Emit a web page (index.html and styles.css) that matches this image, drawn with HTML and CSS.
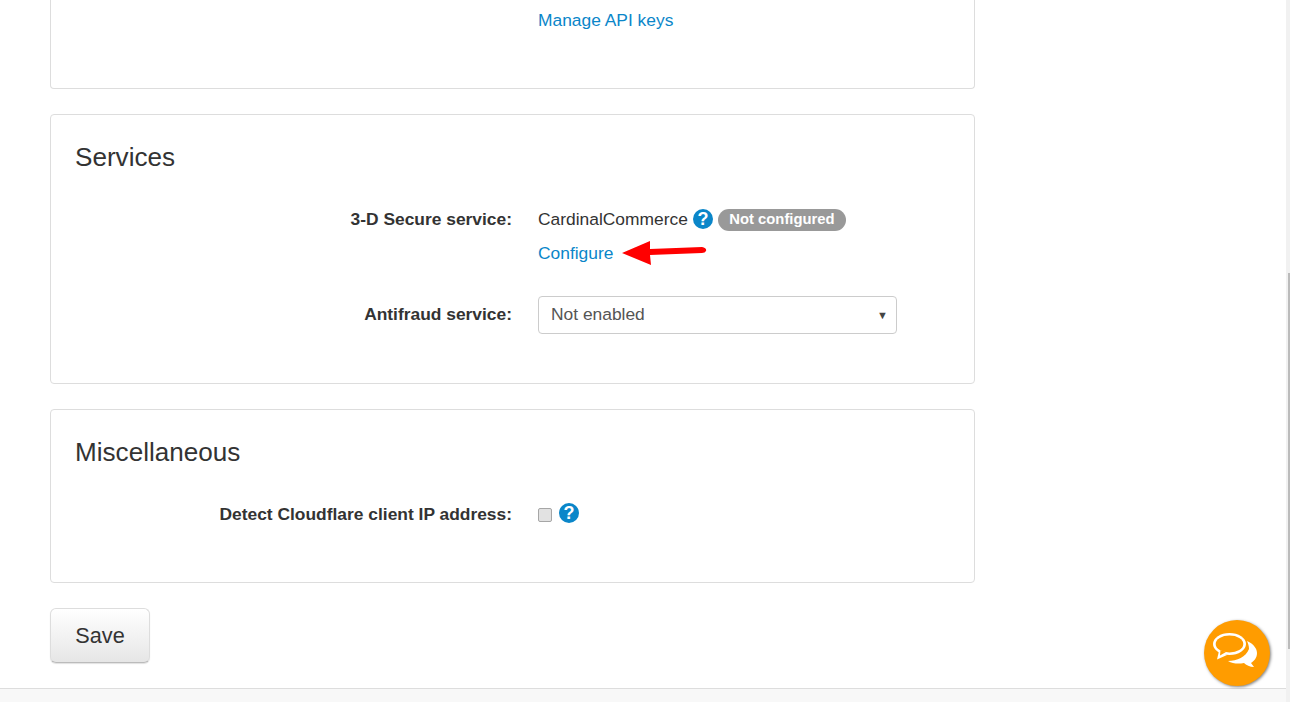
FILE: index.html
```html
<!DOCTYPE html>
<html lang="en">
<head>
<meta charset="utf-8">
<title>Settings</title>
<link rel="stylesheet" href="styles.css">
</head>
<body>
<div class="page">
  <main class="content">
    <section class="panel panel-top">
      <div class="row"><div class="label"></div><div class="value"><a href="#">Manage API keys</a></div></div>
    </section>
    <section class="panel panel-services">
      <h2>Services</h2>
      <div class="row row-secure">
        <div class="label">3-D Secure service:</div>
        <div class="value">
          <div class="line">
            <span>CardinalCommerce</span>
            <svg class="help" viewBox="0 0 20 20"><circle cx="10" cy="10" r="10" fill="#0a86c9"/><text x="10" y="16" text-anchor="middle" class="help-q">?</text></svg>
            <span class="badge">Not configured</span>
          </div>
          <div class="line-link">
            <a href="#">Configure</a>
            <svg class="arrow" viewBox="0 0 90 30"><path d="M2 15 L30 3 L30 11 L82 9 Q87 10 86 13 Q85 15 82 15 L30 17 L31 27 Z" fill="#f00"/></svg>
          </div>
        </div>
      </div>
      <div class="row row-antifraud">
        <div class="label">Antifraud service:</div>
        <div class="value">
          <div class="select"><span>Not enabled</span><span class="caret">▼</span></div>
        </div>
      </div>
    </section>
    <section class="panel panel-misc">
      <h2>Miscellaneous</h2>
      <div class="row row-cloudflare">
        <div class="label">Detect Cloudflare client IP address:</div>
        <div class="value line">
          <span class="checkbox"></span>
          <svg class="help" viewBox="0 0 20 20"><circle cx="10" cy="10" r="10" fill="#0a86c9"/><text x="10" y="16" text-anchor="middle" class="help-q">?</text></svg>
        </div>
      </div>
    </section>
    <button class="save" type="button">Save</button>
  </main>
  <footer class="footer"></footer>
</div>
<div class="scrollbar"><div class="thumb"></div></div>
<div class="chat">
  <svg viewBox="0 0 66 66" width="66" height="66">
    <path d="M43 21 C50 24 53 29 53 33 C53 38 50 41 47 43 L50 47 C46 47 42 45 40 43 C35 44 29 44 24 41 C33 41 42 37 45 29 C45 26 44 23 43 21 Z" fill="#fff"/>
    <ellipse cx="25.500" cy="24" rx="16.500" ry="11" fill="#fff"/>
    <path d="M15 31 L13 39.500 L23 35 Z" fill="#fff"/>
    <ellipse cx="25.500" cy="24" rx="13.800" ry="8.500" fill="#ff9c00"/>
    <path d="M16.500 30 L16 35.500 L22 32 Z" fill="#ff9c00"/>
  </svg>
</div>
</body>
</html>
```
FILE: styles.css
```css
* { box-sizing: border-box; }
html, body { margin: 0; height: 702px; overflow: hidden; background: #fff; }
body { font-family: "Liberation Sans", Arial, sans-serif; font-size: 17.4px; line-height: 24px; color: #333; position: relative; }
a { color: #0a86c9; text-decoration: none; }
.page { height: 702px; display: flex; flex-direction: column; }
.content { flex: 1; padding-left: 50px; display: flex; flex-direction: column; align-items: flex-start; gap: 25px; }
.panel { width: 925px; border: 1px solid #ddd; border-radius: 4px; padding: 0 24px; background: #fff; }
.panel-top { height: 89px; border-top: 0; border-radius: 0 0 4px 4px; padding-top: 8px; }
.panel-services { height: 270px; padding-top: 29px; }
.panel-misc { height: 174px; padding-top: 29px; }
h2 { margin: 0; font-size: 26.100px; font-weight: 400; line-height: 26px; color: #333; }
.row { display: grid; grid-template-columns: 437px 1fr; column-gap: 26px; }
.label { font-weight: 700; text-align: right; }
.row-secure { margin-top: 37px; }
.row-antifraud { margin-top: 31px; }
.row-antifraud .label { padding-top: 6px; }
.row-cloudflare { margin-top: 37px; }
.line { display: flex; align-items: center; height: 24px; }
.line-link { position: relative; margin-top: 10px; height: 24px; }
.help { width: 20px; height: 20px; margin-left: 5px; flex: none; }
.help-q { font-family: "Liberation Sans", Arial, sans-serif; font-size: 18px; font-weight: 700; fill: #fff; }
.badge { margin-left: 5px; height: 22px; margin-top: 1px; padding: 0 11.500px; border-radius: 11px; background: #999; color: #fff; font-size: 14.800px; font-weight: 700; line-height: 21px; }
.arrow { position: absolute; left: 82px; top: -3px; width: 90px; height: 30px; }
.select { width: 359px; height: 38px; border: 1px solid #ccc; border-radius: 4px; padding: 0 12px 2px; display: flex; justify-content: space-between; align-items: center; color: #555; }
.caret { font-size: 11px; color: #444; margin-right: -4px; margin-top: 2px; }
.checkbox { width: 14px; height: 14px; margin-top: 2px; border: 1px solid #a6a6a6; border-radius: 2px; background: #e2e2e2; }
.row-cloudflare .help { margin-left: 7px; margin-top: -2px; }
.save { width: 100px; height: 55px; border: 1px solid #ddd; border-bottom-color: #bbb; border-radius: 6px; background: linear-gradient(#fff, #e6e6e6); box-shadow: 0 1px 1px rgba(0,0,0,.12); font-family: inherit; font-size: 21.700px; color: #333; padding: 0; }
.footer { height: 14px; border-top: 1px solid #ddd; background: #f8f8f8; }
.scrollbar { position: absolute; top: 0; right: 0; bottom: 0; width: 4px; background: #f1f1f1; }
.thumb { position: absolute; top: 273px; left: 2px; width: 2px; height: 376px; background: #bbb; }
.chat { position: absolute; left: 1204px; top: 620px; width: 66px; height: 66px; border-radius: 50%; background: #ff9c00; box-shadow: 1px 1px 3px rgba(0,0,0,.5); }
.chat svg { display: block; }
```
